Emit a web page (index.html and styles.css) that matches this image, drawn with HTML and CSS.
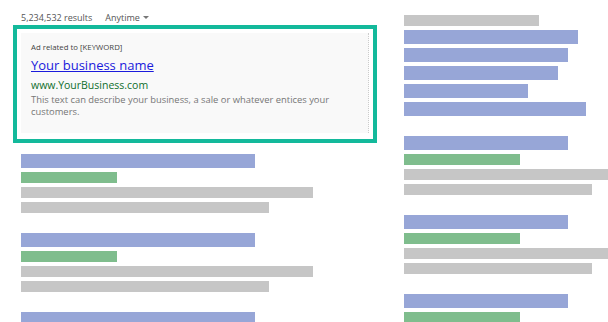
FILE: index.html
```html
<!DOCTYPE html>
<html lang="en">

<head>
    <meta charset="UTF-8">
    <meta name="viewport" content="width=device-width, initial-scale=1.0">
    <title>Search Ad Preview</title>
    <link rel="stylesheet" href="styles.css">
</head>

<body>
    <div class="page">
        <div class="main">
            <div class="toolbar">
                <span class="count">5,234,532 results</span>
                <span class="filter">Anytime <span class="caret"></span></span>
            </div>
            <div class="ad-box">
                <div class="ad">
                    <div class="ad-label">Ad related to [KEYWORD]</div>
                    <a class="ad-title" href="#">Your business name</a>
                    <div class="ad-url">www.YourBusiness.com</div>
                    <div class="ad-text">This text can describe your business, a sale or whatever entices your customers.</div>
                </div>
            </div>
            <div class="results">
                <div class="result">
                    <div class="bar blue" style="width: 234px"></div>
                    <div class="bar green" style="width: 96px"></div>
                    <div class="bar gray" style="width: 292px"></div>
                    <div class="bar gray" style="width: 248px"></div>
                </div>
                <div class="result">
                    <div class="bar blue" style="width: 234px"></div>
                    <div class="bar green" style="width: 96px"></div>
                    <div class="bar gray" style="width: 292px"></div>
                    <div class="bar gray" style="width: 248px"></div>
                </div>
                <div class="result">
                    <div class="bar blue" style="width: 234px"></div>
                    <div class="bar green" style="width: 96px"></div>
                    <div class="bar gray" style="width: 292px"></div>
                    <div class="bar gray" style="width: 248px"></div>
                </div>
            </div>
        </div>
        <div class="side">
            <div class="result">
                <div class="bar gray" style="width: 135px"></div>
                <div class="bar blue" style="width: 174px"></div>
                <div class="bar blue" style="width: 164px"></div>
                <div class="bar blue" style="width: 154px"></div>
                <div class="bar blue" style="width: 124px"></div>
                <div class="bar blue" style="width: 182px"></div>
            </div>
            <div class="result">
                <div class="bar blue" style="width: 164px"></div>
                <div class="bar green" style="width: 116px"></div>
                <div class="bar gray" style="width: 220px"></div>
                <div class="bar gray" style="width: 188px"></div>
            </div>
            <div class="result">
                <div class="bar blue" style="width: 164px"></div>
                <div class="bar green" style="width: 116px"></div>
                <div class="bar gray" style="width: 220px"></div>
                <div class="bar gray" style="width: 188px"></div>
            </div>
            <div class="result">
                <div class="bar blue" style="width: 164px"></div>
                <div class="bar green" style="width: 116px"></div>
                <div class="bar gray" style="width: 220px"></div>
                <div class="bar gray" style="width: 188px"></div>
            </div>
        </div>
    </div>
</body>

</html>
```

FILE: styles.css
```css
html, body {
    margin: 0;
    height: 100%;
    overflow: hidden;
    background: #fff;
}

body {
    font-family: "Open Sans", Arial, sans-serif;
}

.page {
    display: flex;
    padding-left: 13px;
}

.main {
    width: 364px;
    flex-shrink: 0;
}

.toolbar {
    display: flex;
    gap: 13px;
    height: 25px;
    padding-left: 8px;
    font-size: 9px;
    line-height: 12px;
    padding-top: 12px;
    box-sizing: border-box;
    color: #555;
}

.caret {
    display: inline-block;
    width: 0;
    height: 0;
    margin-left: 1px;
    border-left: 3px solid transparent;
    border-right: 3px solid transparent;
    border-top: 3px solid #777;
    vertical-align: 2px;
}

.ad-box {
    border: 4px solid #13b99b;
    padding: 4px 4px 6px;
    height: 118px;
    box-sizing: border-box;
}

.ad {
    background: #f9f9f9;
    border-right: 1px dotted #ccc;
    height: 100px;
    box-sizing: border-box;
    padding: 8px 10px 0 10px;
}

.ad-label {
    font-size: 7.8px;
    color: #444;
    line-height: 12px;
}

.ad-title {
    display: inline-block;
    margin-top: 2px;
    font-size: 13px;
    line-height: 18px;
    color: #1a1adc;
}

.ad-url {
    margin-top: 4px;
    font-size: 10.5px;
    line-height: 12px;
    color: #0f6e2c;
}

.ad-text {
    margin-top: 3px;
    font-size: 9.4px;
    line-height: 11.5px;
    color: #777;
    padding-right: 20px;
}

.results {
    padding: 11px 0 0 8px;
}

.result {
    display: flex;
    flex-direction: column;
    gap: 4px;
    margin-bottom: 20px;
}

.side {
    margin-left: 27px;
    padding-top: 15px;
    flex-shrink: 0;
}

.bar {
    height: 11px;
    flex-shrink: 0;
}

.bar.blue {
    height: 14px;
    background: #97a6d7;
}

.bar.green {
    background: #7fbd8d;
}

.bar.gray {
    background: #c6c6c6;
}
```
